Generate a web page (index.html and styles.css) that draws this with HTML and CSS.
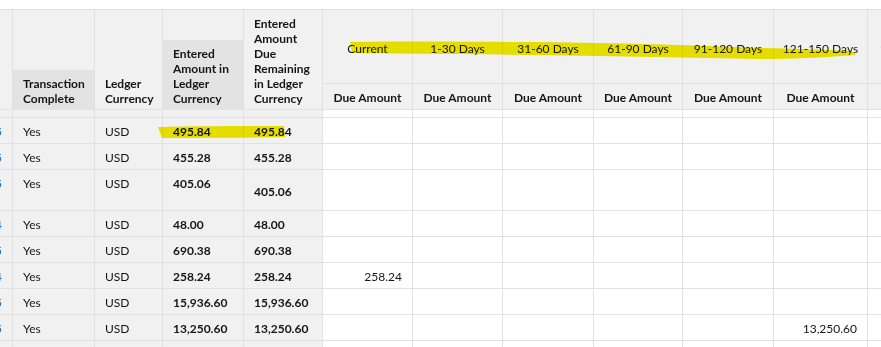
FILE: index.html
```html
<!DOCTYPE html>
<html>
<head>
  <title>Aging report</title>
  <link rel="stylesheet" href="styles.css">
</head>
<body>

<div class="grid-wrap">
  <table class="aging">
    <colgroup>
      <col class="w-num">
      <col class="w-complete">
      <col class="w-cur">
      <col class="w-amt">
      <col class="w-due">
      <col class="w-b0">
      <col class="w-b1">
      <col class="w-b2">
      <col class="w-b3">
      <col class="w-b4">
      <col class="w-b5">
      <col class="w-b6">
    </colgroup>
    <thead>
      <tr class="grp">
        <th rowspan="2" class="lbl"><div class="lbl-in">Number</div></th>
        <th rowspan="2" class="lbl"><div class="lbl-in sorted">Transaction Complete</div></th>
        <th rowspan="2" class="lbl"><div class="lbl-in">Ledger Currency</div></th>
        <th rowspan="2" class="lbl"><div class="lbl-in sorted">Entered Amount in Ledger Currency</div></th>
        <th rowspan="2" class="lbl"><div class="lbl-in">Entered Amount Due Remaining in Ledger Currency</div></th>
        <th>Current</th>
        <th>1-30 Days</th>
        <th>31-60 Days</th>
        <th>61-90 Days</th>
        <th>91-120 Days</th>
        <th>121-150 Days</th>
        <th>151-180 Days</th>
      </tr>
      <tr class="sub">
        <th>Due Amount</th>
        <th>Due Amount</th>
        <th>Due Amount</th>
        <th>Due Amount</th>
        <th>Due Amount</th>
        <th>Due Amount</th>
        <th>Due Amount</th>
      </tr>
    </thead>
    <tbody>
      <tr class="gap"><td></td><td></td><td></td><td></td><td></td><td></td><td></td><td></td><td></td><td></td><td></td><td></td></tr>
      <tr>
        <td class="num"><a href="#">100125</a></td><td>Yes</td><td>USD</td><td class="b">495.84</td><td class="b">495.84</td>
        <td></td><td></td><td></td><td></td><td></td><td></td><td></td>
      </tr>
      <tr>
        <td class="num"><a href="#">100135</a></td><td>Yes</td><td>USD</td><td class="b">455.28</td><td class="b">455.28</td>
        <td></td><td></td><td></td><td></td><td></td><td></td><td></td>
      </tr>
      <tr class="tall">
        <td class="num"><a href="#">100145</a></td><td>Yes</td><td>USD</td><td class="b">405.06</td><td class="b low">405.06</td>
        <td></td><td></td><td></td><td></td><td></td><td></td><td></td>
      </tr>
      <tr>
        <td class="num"><a href="#">100154</a></td><td>Yes</td><td>USD</td><td class="b">48.00</td><td class="b">48.00</td>
        <td></td><td></td><td></td><td></td><td></td><td></td><td></td>
      </tr>
      <tr>
        <td class="num"><a href="#">100165</a></td><td>Yes</td><td>USD</td><td class="b">690.38</td><td class="b">690.38</td>
        <td></td><td></td><td></td><td></td><td></td><td></td><td></td>
      </tr>
      <tr>
        <td class="num"><a href="#">100174</a></td><td>Yes</td><td>USD</td><td class="b">258.24</td><td class="b">258.24</td>
        <td class="r">258.24</td><td></td><td></td><td></td><td></td><td></td><td></td>
      </tr>
      <tr>
        <td class="num"><a href="#">100185</a></td><td>Yes</td><td>USD</td><td class="b">15,936.60</td><td class="b">15,936.60</td>
        <td></td><td></td><td></td><td></td><td></td><td></td><td></td>
      </tr>
      <tr>
        <td class="num"><a href="#">100195</a></td><td>Yes</td><td>USD</td><td class="b">13,250.60</td><td class="b">13,250.60</td>
        <td></td><td></td><td></td><td></td><td></td><td class="r">13,250.60</td><td></td>
      </tr>
      <tr>
        <td class="num"><a href="#">100205</a></td><td>Yes</td><td>USD</td><td class="b">9,120.00</td><td class="b">9,120.00</td>
        <td></td><td></td><td></td><td></td><td></td><td></td><td></td>
      </tr>
    </tbody>
  </table>

  <!-- marker strokes drawn over the screenshot -->
  <svg class="marks" width="881" height="347" viewBox="0 0 881 347">
    <path d="M350,42 C420,41 470,42 540,42 C620,43 690,45 760,48 C800,49 830,50 852,51 L856,55 C820,58 790,59 760,59 C690,58 620,56 540,55 C460,54 400,54 352,53 Z"/>
    <path d="M158,127 C200,126 250,126 284,126 L285,137 C250,138 200,138 162,138 Z"/>
  </svg>
</div>

</body>
</html>
```

FILE: styles.css
```css
body {
  margin: 0;
  font-family: Lato, "Noto Sans", sans-serif;
  font-size: 12px;
  color: #161513;
  background: #fff;
}

.grid-wrap {
  position: relative;
  width: 881px;
  height: 347px;
  padding-top: 9px;
  box-sizing: border-box;
  overflow: hidden;
}

.aging {
  border-collapse: collapse;
  table-layout: fixed;
  width: 1035px;
  margin-left: -68px;
}

.w-num { width: 80px; }
.w-complete { width: 82px; }
.w-cur { width: 68px; }
.w-amt { width: 81px; }
.w-due { width: 79px; }
.w-b0 { width: 90px; }
.w-b1 { width: 90px; }
.w-b2 { width: 91px; }
.w-b3 { width: 89px; }
.w-b4 { width: 91px; }
.w-b5 { width: 94px; }
.w-b6 { width: 100px; }

th, td {
  border: 1px solid #e1e1e1;
  padding: 0;
}

thead th {
  background: #f1f1f1;
  font-weight: 700;
  text-align: center;
  white-space: nowrap;
}

.grp { height: 74px; }
.grp th { font-weight: 400; padding-top: 3px; }
.sub { height: 26px; }
.sub th { padding-top: 2px; }

.grp th.lbl {
  vertical-align: bottom;
  text-align: left;
  white-space: normal;
  font-weight: 700;
  padding-top: 0;
}

.lbl-in {
  padding: 6px 10px 3px;
  line-height: 15px;
}

.lbl-in.sorted { background: #e3e3e3; }

tbody tr { height: 26px; }
tbody tr.gap { height: 8px; }
tbody tr.tall { height: 41px; }

td {
  vertical-align: top;
  padding: 6px 10px 0;
  line-height: 16px;
  white-space: nowrap;
  background: #fff;
}

td:nth-child(-n+5) { background: #f1f1f1; }

td.num { text-align: right; }
td.num a { color: #1a6fb5; text-decoration: none; }

td.b { font-weight: 700; }
td.low { padding-top: 14px; }
td.r { text-align: right; }

.marks {
  position: absolute;
  left: 0;
  top: 0;
  pointer-events: none;
  mix-blend-mode: multiply;
}

.marks path { fill: #f3ea00; }
```
